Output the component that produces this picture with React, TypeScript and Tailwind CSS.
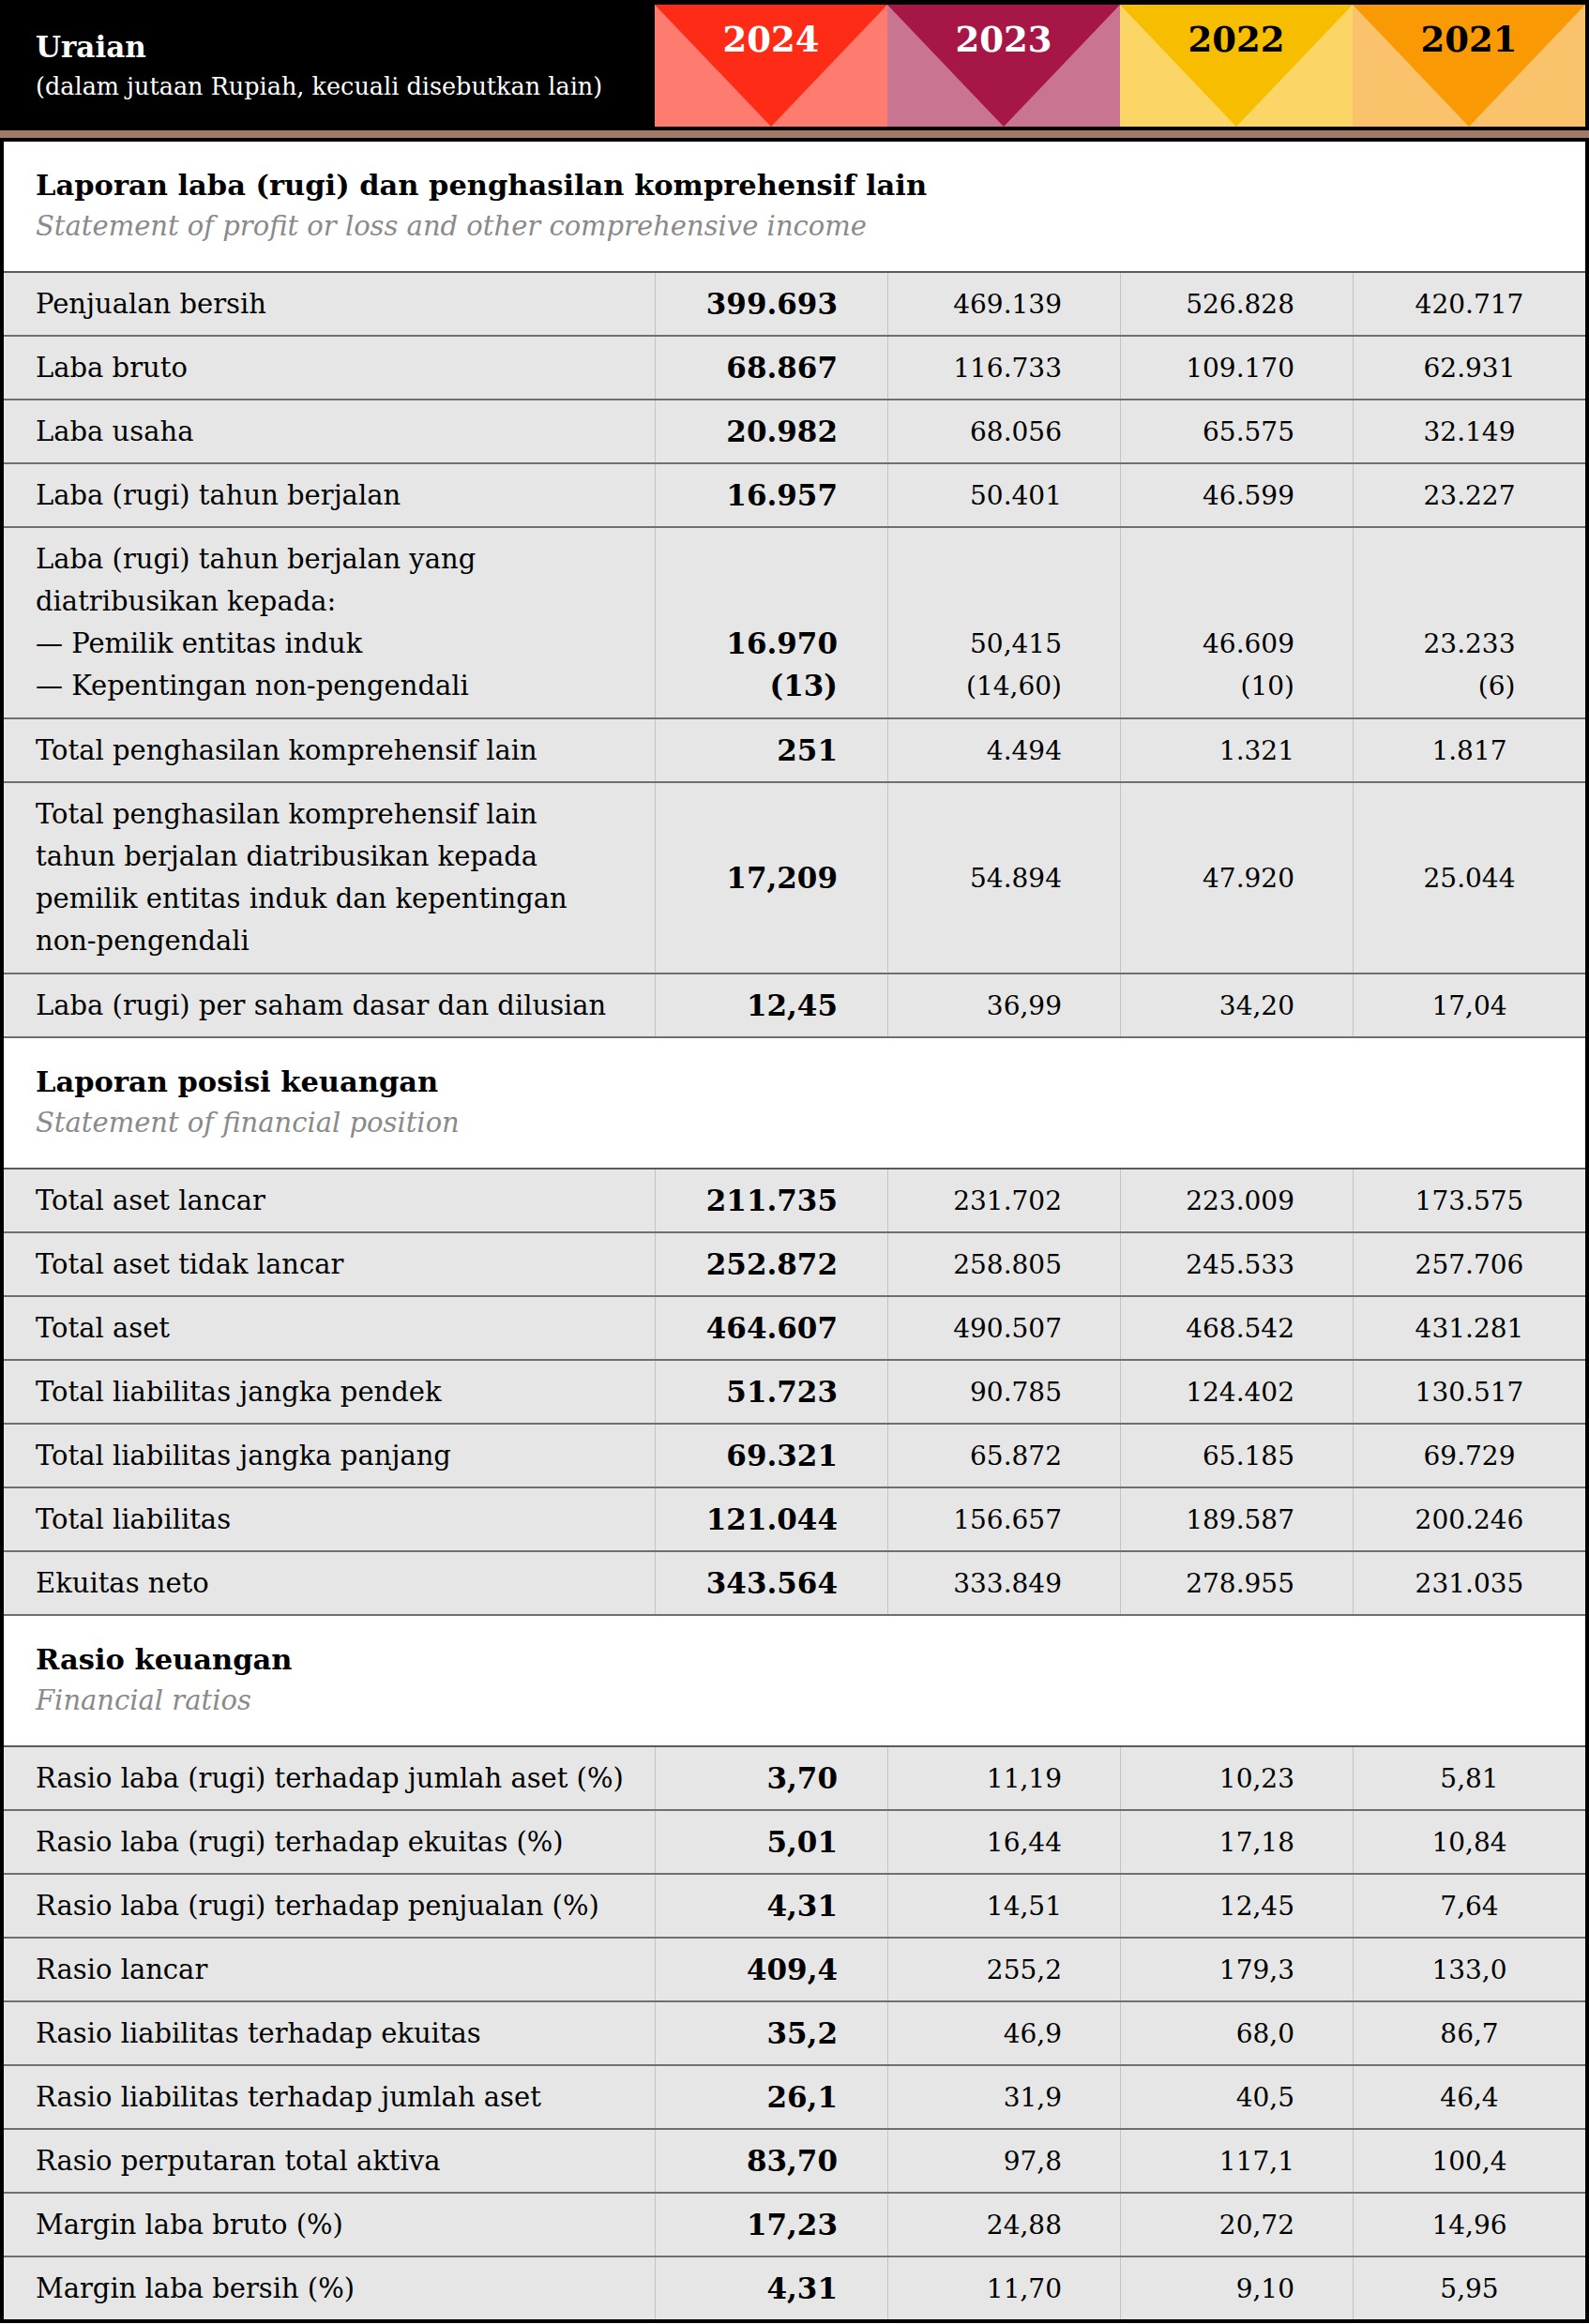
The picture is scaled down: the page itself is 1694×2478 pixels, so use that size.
import React from "react";

type Row =
  | { kind: "single"; label: string; values: string[] }
  | { kind: "attrib"; lines: string[]; values: [string, string][] }
  | { kind: "multi"; lines: string[]; values: string[] };

type Section = { title: string; subtitle: string; rows: Row[] };

const sections: Section[] = [
  {
    title: "Laporan laba (rugi) dan penghasilan komprehensif lain",
    subtitle: "Statement of profit or loss and other comprehensive income",
    rows: [
      { kind: "single", label: "Penjualan bersih", values: ["399.693", "469.139", "526.828", "420.717"] },
      { kind: "single", label: "Laba bruto", values: ["68.867", "116.733", "109.170", "62.931"] },
      { kind: "single", label: "Laba usaha", values: ["20.982", "68.056", "65.575", "32.149"] },
      { kind: "single", label: "Laba (rugi) tahun berjalan", values: ["16.957", "50.401", "46.599", "23.227"] },
      {
        kind: "attrib",
        lines: [
          "Laba (rugi) tahun berjalan yang",
          "diatribusikan kepada:",
          "— Pemilik entitas induk",
          "— Kepentingan non-pengendali",
        ],
        values: [
          ["16.970", "(13)"],
          ["50,415", "(14,60)"],
          ["46.609", "(10)"],
          ["23.233", "(6)"],
        ],
      },
      { kind: "single", label: "Total penghasilan komprehensif lain", values: ["251", "4.494", "1.321", "1.817"] },
      {
        kind: "multi",
        lines: [
          "Total penghasilan komprehensif lain",
          "tahun berjalan diatribusikan kepada",
          "pemilik entitas induk dan kepentingan",
          "non-pengendali",
        ],
        values: ["17,209", "54.894", "47.920", "25.044"],
      },
      { kind: "single", label: "Laba (rugi) per saham dasar dan dilusian", values: ["12,45", "36,99", "34,20", "17,04"] },
    ],
  },
  {
    title: "Laporan posisi keuangan",
    subtitle: "Statement of financial position",
    rows: [
      { kind: "single", label: "Total aset lancar", values: ["211.735", "231.702", "223.009", "173.575"] },
      { kind: "single", label: "Total aset tidak lancar", values: ["252.872", "258.805", "245.533", "257.706"] },
      { kind: "single", label: "Total aset", values: ["464.607", "490.507", "468.542", "431.281"] },
      { kind: "single", label: "Total liabilitas jangka pendek", values: ["51.723", "90.785", "124.402", "130.517"] },
      { kind: "single", label: "Total liabilitas jangka panjang", values: ["69.321", "65.872", "65.185", "69.729"] },
      { kind: "single", label: "Total liabilitas", values: ["121.044", "156.657", "189.587", "200.246"] },
      { kind: "single", label: "Ekuitas neto", values: ["343.564", "333.849", "278.955", "231.035"] },
    ],
  },
  {
    title: "Rasio keuangan",
    subtitle: "Financial ratios",
    rows: [
      { kind: "single", label: "Rasio laba (rugi) terhadap jumlah aset (%)", values: ["3,70", "11,19", "10,23", "5,81"] },
      { kind: "single", label: "Rasio laba (rugi) terhadap ekuitas (%)", values: ["5,01", "16,44", "17,18", "10,84"] },
      { kind: "single", label: "Rasio laba (rugi) terhadap penjualan (%)", values: ["4,31", "14,51", "12,45", "7,64"] },
      { kind: "single", label: "Rasio lancar", values: ["409,4", "255,2", "179,3", "133,0"] },
      { kind: "single", label: "Rasio liabilitas terhadap ekuitas", values: ["35,2", "46,9", "68,0", "86,7"] },
      { kind: "single", label: "Rasio liabilitas terhadap jumlah aset", values: ["26,1", "31,9", "40,5", "46,4"] },
      { kind: "single", label: "Rasio perputaran total aktiva", values: ["83,70", "97,8", "117,1", "100,4"] },
      { kind: "single", label: "Margin laba bruto (%)", values: ["17,23", "24,88", "20,72", "14,96"] },
      { kind: "single", label: "Margin laba bersih (%)", values: ["4,31", "11,70", "9,10", "5,95"] },
    ],
  },
];

const years = [
  { y: "2024", tri: "#fe2b17", bg: "#fe7c6f", text: "text-white" },
  { y: "2023", tri: "#a61748", bg: "#c97592", text: "text-white" },
  { y: "2022", tri: "#f7be00", bg: "#fbd566", text: "text-black" },
  { y: "2021", tri: "#f99a05", bg: "#fac26b", text: "text-black" },
];

const valueAlign = [
  "justify-end pr-[53px] font-bold text-[31px]",
  "justify-end pr-[62px] text-[28px]",
  "justify-end pr-[62px] text-[28px]",
  "justify-center text-[28px]",
];

function YearCell({ y, tri, bg, text }: { y: string; tri: string; bg: string; text: string }) {
  return (
    <div className="relative w-[248px] h-full" style={{ backgroundColor: bg }}>
      <svg className="absolute inset-0 w-full h-full" viewBox="0 0 100 100" preserveAspectRatio="none">
        <polygon points="0,0 100,0 50,100" fill={tri} />
      </svg>
      <div className={`relative flex justify-center pt-[16px] text-[37px] leading-[42px] font-bold ${text}`}>{y}</div>
    </div>
  );
}

const gridCols = "grid grid-cols-[694px_248px_248px_248px_248px]";
const labelCls = "pl-[34px] pt-[11px] leading-[45px] text-[29px] text-black";

function DataRow({ row, last }: { row: Row; last: boolean }) {
  const border = last ? "" : "border-b-2 border-[#6f6f6f]";
  if (row.kind === "single") {
    return (
      <div className={`${gridCols} bg-[#e6e6e6] ${border}`}>
        <div className={`${labelCls} pb-[10px]`}>{row.label}</div>
        {row.values.map((v, i) => (
          <div key={i} className={`flex items-start border-l border-[#c4c4c4] pt-[11px] pb-[10px] leading-[45px] text-black ${valueAlign[i]}`}>
            {v}
          </div>
        ))}
      </div>
    );
  }
  if (row.kind === "attrib") {
    return (
      <div className={`${gridCols} bg-[#e6e6e6] ${border}`}>
        <div className={`${labelCls} pb-[11px] flex flex-col`}>
          {row.lines.map((l, i) => (
            <span key={i}>{l}</span>
          ))}
        </div>
        {row.values.map((v, i) => (
          <div key={i} className={`flex items-end border-l border-[#c4c4c4] pt-[11px] pb-[11px] leading-[45px] text-black ${valueAlign[i]}`}>
            <div className="flex flex-col items-end">
              <span>{v[0]}</span>
              <span>{v[1]}</span>
            </div>
          </div>
        ))}
      </div>
    );
  }
  return (
    <div className={`${gridCols} bg-[#e6e6e6] ${border}`}>
      <div className={`${labelCls} pb-[11px] flex flex-col`}>
        {row.lines.map((l, i) => (
          <span key={i}>{l}</span>
        ))}
      </div>
      {row.values.map((v, i) => (
        <div key={i} className={`flex items-center border-l border-[#c4c4c4] pt-[11px] pb-[11px] leading-[45px] text-black ${valueAlign[i]}`}>
          {v}
        </div>
      ))}
    </div>
  );
}

export default function App() {
  return (
    <div className="w-[1694px] bg-white font-['DejaVu_Serif',serif]">
      <div className="flex h-[139px] bg-black">
        <div className="w-[698px] pl-[38px] pt-[32px] text-white">
          <div className="text-[31px] leading-[37px] font-bold">Uraian</div>
          <div className="text-[25.5px] leading-[40px] mt-[3px] whitespace-nowrap">(dalam jutaan Rupiah, kecuali disebutkan lain)</div>
        </div>
        <div className="flex h-full pt-[5px] pb-[4px]">
          {years.map((y) => (
            <YearCell key={y.y} {...y} />
          ))}
        </div>
      </div>
      <div className="h-[8px] bg-[#a27a6a]" />
      <div className="border-4 border-black">
        {sections.map((s, si) => (
          <div key={si}>
            <div className="bg-white pl-[34px] pt-[24px] pb-[26px] border-b-2 border-[#5a5a5a]">
              <div className="text-[30.5px] leading-[44px] font-bold text-black whitespace-nowrap">{s.title}</div>
              <div className="text-[29px] leading-[44px] italic text-[#8a8a8a] whitespace-nowrap">{s.subtitle}</div>
            </div>
            {s.rows.map((r, ri) => (
              <DataRow key={ri} row={r} last={si === sections.length - 1 && ri === s.rows.length - 1} />
            ))}
          </div>
        ))}
      </div>
    </div>
  );
}
